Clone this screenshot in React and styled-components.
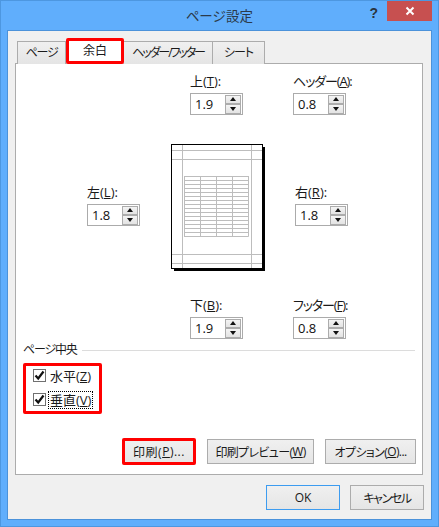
import React from 'react';
import styled, { createGlobalStyle } from 'styled-components';

const Global = createGlobalStyle`
  html, body { margin: 0; padding: 0; }
  body { width: 439px; height: 527px; overflow: hidden; font-family: "Open Sans", "Noto Sans CJK JP", sans-serif; font-feature-settings: "palt"; }
`;
const Window = styled.div`
  box-sizing: border-box; width: 439px; height: 527px; background: #60aefc;
  border: 1px solid #4d97e0; display: flex; flex-direction: column; padding: 0 6px 7px;
`;
const TitleBar = styled.div`
  height: 29px; flex: none; display: flex; align-items: flex-start; justify-content: center; position: relative;
`;
const Title = styled.div`
  font-size: 13.5px; line-height: 30px; color: #2b3a4a; font-feature-settings: normal;
`;
const Help = styled.div`
  position: absolute; right: 54px; top: 3px; font: bold 14px/18px "Liberation Sans", sans-serif; color: #2a3440;
`;
const Close = styled.div`
  position: absolute; right: 0; top: 0; width: 45px; height: 20px; background: #c75050;
  display: flex; align-items: center; justify-content: center;
`;
const Client = styled.div`
  flex: 1; background: #f0f0f0; border: 1px solid #4b92da; display: flex; flex-direction: column;
  padding: 10px 8px 9px 7px; box-sizing: border-box;
`;
const TabRow = styled.div`
  display: flex; height: 22px; padding-left: 2px; flex: none; position: relative; z-index: 1;
`;
const Tab = styled.div`
  box-sizing: border-box; width: ${p => p.$w}px; height: 23px; border: 1px solid #acacac; border-left-width: ${p => p.$first ? 1 : 0}px;
  border-bottom: 0; font-size: 12px; line-height: 21px; text-align: center; color: #1a1a1a; white-space: nowrap;
  letter-spacing: ${p => p.$ls || 0}px;
  background: ${p => p.$active ? '#fff' : 'linear-gradient(#f0f0f0, #e5e5e5)'};
  ${p => p.$active && `outline: 3px solid #f00; outline-offset: -3px; border: 0; height: 26px; margin-top: -3px; line-height: 26px; border-radius: 2px; position: relative; font-size: 12px;`}
`;
const Panel = styled.div`
  box-sizing: border-box; height: 412px; background: #fff; border: 1px solid #acacac; display: flex; flex-direction: column; padding: 10px 7px 10px 7px;
`;
const MarginGrid = styled.div`
  display: grid; grid-template-columns: 64px 84px 122px 1fr; grid-template-rows: 41px 125px 41px; row-gap: 29px; height: 268px;
`;
const Field = styled.div`
  grid-column: ${p => p.$col}; grid-row: ${p => p.$row}; margin-left: ${p => p.$indent || 0}px; margin-top: ${p => p.$top || 0}px;
  width: 54px;
`;
const Label = styled.div`
  font-size: 13px; line-height: 15px; height: 19px; color: #1a1a1a; white-space: nowrap; letter-spacing: ${p => p.$ls || 0}px;
  u { text-underline-offset: 1px; }
`;
const Spinner = styled.div`
  box-sizing: border-box; width: 53px; height: 22px; border: 1px solid #ababab; background: #fff; display: flex; align-items: center; justify-content: space-between;
  padding: 0 1px 0 4px;
`;
const SpinValue = styled.span`
  font: 13px/20px "Open Sans", "Liberation Sans", sans-serif; color: #111;
`;
const SpinButtons = styled.div`
  display: flex; flex-direction: column; gap: 0; width: 16px;
`;
const SpinButton = styled.div`
  box-sizing: border-box; height: 9.5px; border: 1px solid #acacac; background: linear-gradient(#f4f4f4, #e3e3e3);
  display: flex; align-items: center; justify-content: center;
`;
const Arrow = styled.i`
  width: 0; height: 0; border-left: 3.5px solid transparent; border-right: 3.5px solid transparent;
  ${p => p.$down ? 'border-top: 4px solid #111;' : 'border-bottom: 4px solid #111;'}
`;
const PreviewCell = styled.div`
  grid-column: 3; grid-row: 2;
`;
const Group = styled.div`
  display: flex; align-items: center; gap: 5px; height: 16px;
`;
const GroupName = styled.span`
  font-size: 12px; color: #1a1a1a; white-space: nowrap; line-height: 16px; letter-spacing: -1.2px;
`;
const GroupRule = styled.div`
  flex: 1; height: 1px; background: #dcdcdc;
`;
const Checks = styled.div`
  box-sizing: border-box; width: 79px; height: 51px; margin-top: 5px; outline: 3px solid #f00; outline-offset: -3px; border-radius: 2px;
  display: flex; flex-direction: column; gap: 11px; padding: 6px 0 0 10px;
`;
const Check = styled.div`
  display: flex; align-items: center; gap: 3px; height: 13px; font-size: 13px; color: #1a1a1a; white-space: nowrap;
`;
const Box = styled.div`
  box-sizing: border-box; width: 13px; height: 13px; border: 1px solid #707070; background: #fff; display: flex; align-items: center; justify-content: center; flex: none;
`;
const CheckText = styled.span`
  padding: 0 1px; outline: ${p => p.$focus ? '1px dotted #000' : 'none'}; line-height: 16px;
`;
const Actions = styled.div`
  display: flex; margin-top: auto; padding-left: 99px; gap: 11px; align-items: center; height: 25px;
`;
const Btn = styled.div`
  box-sizing: border-box; width: ${p => p.$w}px; height: 25px; border: 1px solid ${p => p.$primary ? '#3d9cf0' : '#acacac'}; flex: none;
  background: linear-gradient(#f0f0f0, #e5e5e5); display: flex; align-items: center; justify-content: center;
  font-size: 12px; color: #1a1a1a; white-space: nowrap; letter-spacing: ${p => p.$ls || 0}px;
  ${p => p.$marked && `height: 27px; outline: 3px solid #f00; outline-offset: -3px; border: 0; border-radius: 2px;`}
`;
const Footer = styled.div`
  display: flex; justify-content: flex-end; gap: 10px; margin: 10px -1px 0 0; flex: none;
`;

const Spin = ({ value }) => (
  <Spinner>
    <SpinValue>{value}</SpinValue>
    <SpinButtons>
      <SpinButton><Arrow /></SpinButton>
      <SpinButton><Arrow $down /></SpinButton>
    </SpinButtons>
  </Spinner>
);

const F = ({ col, row, indent, top, name, k, value, ls }) => (
  <Field $col={col} $row={row} $indent={indent} $top={top}>
    <Label $ls={ls}>{name}(<u>{k}</u>):</Label>
    <Spin value={value} />
  </Field>
);

const Tick = () => (
  <svg width="11" height="11" viewBox="0 0 11 11">
    <path d="M1.5 5.5 L4.2 8.5 L9.5 1.5" fill="none" stroke="#111" strokeWidth="2.2" />
  </svg>
);

const Sheet = () => {
  const rows = Array.from({ length: 16 }, (_, i) => 176.5 - 144 + i * 4);
  const cols = Array.from({ length: 5 }, (_, i) => 184.5 - 171 + i * 16);
  return (
    <svg width="95" height="128" viewBox="0 0 95 128" style={{ display: 'block' }}>
      <rect x="3" y="3" width="91" height="124" fill="#000" />
      <rect x="0.5" y="0.5" width="91" height="124" fill="#fff" stroke="#000" />
      <g stroke="#bdbdbd" fill="none">
        <path d="M11.5 1V124M80.5 1V124M1 6.5H91M1 15.5H91M1 110.5H91M1 119.5H91" />
        {rows.map(y => <path key={y} d={`M13 ${y}H77.5`} />)}
        {cols.map(x => <path key={x} d={`M${x} 32V92.5`} />)}
      </g>
    </svg>
  );
};

export default function App() {
  return (
    <Window>
      <Global />
      <TitleBar>
        <Title>ページ設定</Title>
        <Help>?</Help>
        <Close>
          <svg width="10" height="10" viewBox="0 0 10 10"><path d="M1.5 1.5L8.5 8.5M8.5 1.5L1.5 8.5" stroke="#fff" strokeWidth="2" /></svg>
        </Close>
      </TitleBar>
      <Client>
        <TabRow>
          <Tab $w={49} $first $ls={-1.2}>ページ</Tab>
          <Tab $w={58} $active>余白</Tab>
          <Tab $w={89} $ls={-2.1}>ヘッダー/フッター</Tab>
          <Tab $w={52} $ls={-1}>シート</Tab>
        </TabRow>
        <Panel>
          <MarginGrid>
            <F col={3} row={1} indent={19} name="上" k="T" value="1.9" />
            <F col={4} row={1} name="ヘッダー" k="A" value="0.8" ls={-1.1} />
            <F col={2} row={2} top={41} name="左" k="L" value="1.8" />
            <PreviewCell><Sheet /></PreviewCell>
            <F col={4} row={2} indent={2} top={41} name="右" k="R" value="1.8" />
            <F col={3} row={3} indent={19} name="下" k="B" value="1.9" />
            <F col={4} row={3} name="フッター" k="F" value="0.8" ls={-1.1} />
          </MarginGrid>
          <Group>
            <GroupName>ページ中央</GroupName>
            <GroupRule />
          </Group>
          <Checks>
            <Check><Box><Tick /></Box><CheckText>水平(<u>Z</u>)</CheckText></Check>
            <Check><Box><Tick /></Box><CheckText $focus>垂直(<u>V</u>)</CheckText></Check>
          </Checks>
          <Actions>
            <Btn $w={74} $marked $ls={0.5}>印刷(<u>P</u>)...</Btn>
            <Btn $w={107} $ls={-0.65}>印刷プレビュー(<u>W</u>)</Btn>
            <Btn $w={91} $ls={-0.6}>オプション(<u>O</u>)...</Btn>
          </Actions>
        </Panel>
        <Footer>
          <Btn $w={74} $primary>OK</Btn>
          <Btn $w={74} $ls={-1.4}>キャンセル</Btn>
        </Footer>
      </Client>
    </Window>
  );
}
